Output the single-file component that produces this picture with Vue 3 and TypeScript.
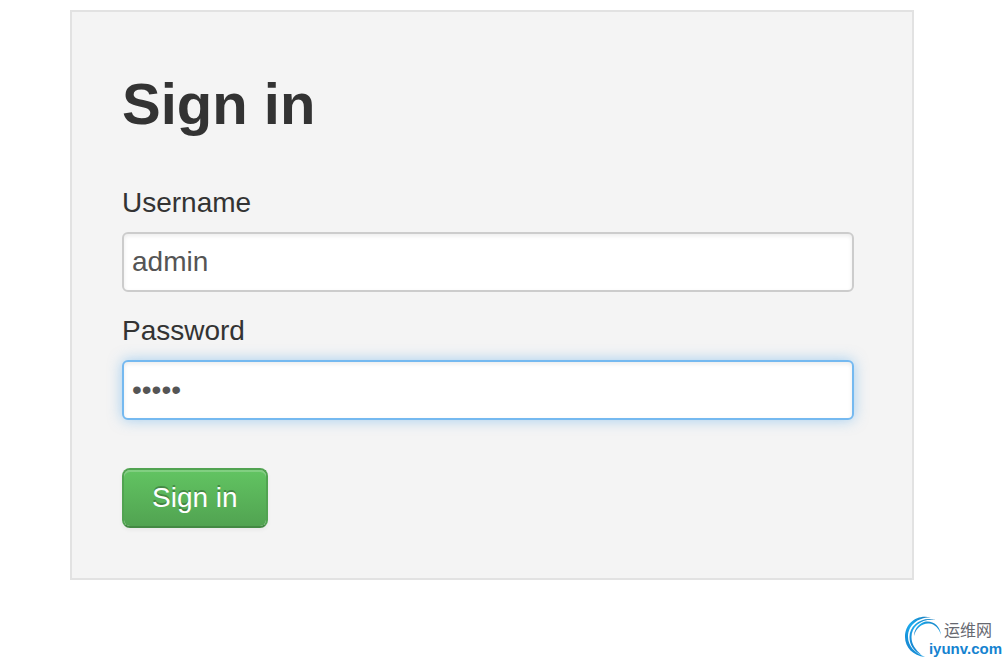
<script setup lang="ts">
import { ref } from 'vue'

const username = ref<string>('admin')
const password = ref<string>('admin')
</script>

<template>
  <div class="page">
    <main class="panel">
      <form class="form" @submit.prevent>
        <h1 class="title">Sign in</h1>
        <label class="label" for="username">Username</label>
        <input id="username" v-model="username" class="field" type="text" autocomplete="username" />
        <label class="label" for="password">Password</label>
        <input id="password" v-model="password" class="field active" type="password" autocomplete="current-password" />
        <button class="submit" type="submit">Sign in</button>
      </form>
    </main>
    <footer class="footer">
      <div class="brand">
        <svg class="swirl" viewBox="0 0 40 42" width="40" height="42" aria-hidden="true">
          <defs>
            <linearGradient id="swirl-fill" x1="0" y1="1" x2="1" y2="0">
              <stop offset="0" stop-color="#1577c4" />
              <stop offset="0.5" stop-color="#1cabee" />
              <stop offset="1" stop-color="#1677b8" />
            </linearGradient>
          </defs>
          <path d="M26 1.5C12-2 0 7 0 21c0 10 8 19 20 20C10 37 3 30 3 21 3 9 13 1 26 1.5z" fill="url(#swirl-fill)" />
          <path d="M31 4C17 0 4.500 9 4.500 21c0 8 4 14 12 18C10 33 6.500 28 6.500 21 6.500 10 17 2 31 4z" fill="url(#swirl-fill)" />
          <path d="M36 19C35 9 27 4 19 6c-6 2-10 8-10 14C11 12 17 7 24 7.500c6 .5 10 5 12 11.500z" fill="url(#swirl-fill)" />
        </svg>
        <div class="words">
          <span class="cn">运维网</span>
          <span class="domain">iyunv.com</span>
        </div>
      </div>
    </footer>
  </div>
</template>

<style>
body {
  margin: 0;
  background: #fff;
}
</style>

<style scoped>
.page {
  box-sizing: border-box;
  min-height: 100vh;
  display: flex;
  flex-direction: column;
  padding-top: 10px;
  font-family: "Liberation Sans", Arial, "Noto Sans CJK SC", sans-serif;
  font-size: 28px;
  color: #333;
}
.panel {
  margin: 0 94px 0 70px;
  padding: 50px 58px 50px 50px;
  background: #f4f4f4;
  border: 2px solid #e2e2e2;
}
.form {
  display: flex;
  flex-direction: column;
}
.title {
  margin: 0 0 36px;
  font-size: 58px;
  line-height: 84px;
  font-weight: 700;
}
.label {
  line-height: 42px;
  margin-bottom: 8px;
}
.field {
  box-sizing: border-box;
  width: 100%;
  height: 60px;
  margin: 0 0 18px;
  padding: 0 8px;
  border: 2px solid #ccc;
  border-radius: 6px;
  background: #fff;
  box-shadow: inset 0 2px 4px rgba(0, 0, 0, 0.08);
  color: #555;
  font: inherit;
  outline: none;
}
.active,
.field:focus {
  border-color: #75b9f0;
  box-shadow: inset 0 2px 4px rgba(0, 0, 0, 0.08), 0 0 14px rgba(82, 168, 236, 0.5);
}
.submit {
  align-self: flex-start;
  height: 60px;
  margin-top: 30px;
  padding: 0 28px;
  border: 2px solid #51a351;
  border-bottom-color: #438943;
  border-radius: 8px;
  background: linear-gradient(#62c462, #51a351) padding-box;
  box-shadow: inset 0 2px 0 rgba(255, 255, 255, 0.2), 0 2px 4px rgba(0, 0, 0, 0.05);
  color: #fff;
  font: inherit;
  text-shadow: 0 -2px 0 rgba(0, 0, 0, 0.25);
  cursor: pointer;
}
.footer {
  display: flex;
  justify-content: flex-end;
  margin-top: auto;
  padding: 0 6px 6px 0;
}
.brand {
  display: flex;
  align-items: flex-start;
}
.swirl {
  flex: none;
  margin-right: -16px;
}
.words {
  display: flex;
  flex-direction: column;
}
.cn {
  align-self: flex-end;
  margin-right: 10px;
  font-family: "Noto Sans CJK SC", sans-serif;
  font-size: 16px;
  line-height: 26px;
  color: #666870;
}
.domain {
  font-size: 15px;
  line-height: 14px;
  font-weight: 700;
  color: #1583d0;
}
</style>
